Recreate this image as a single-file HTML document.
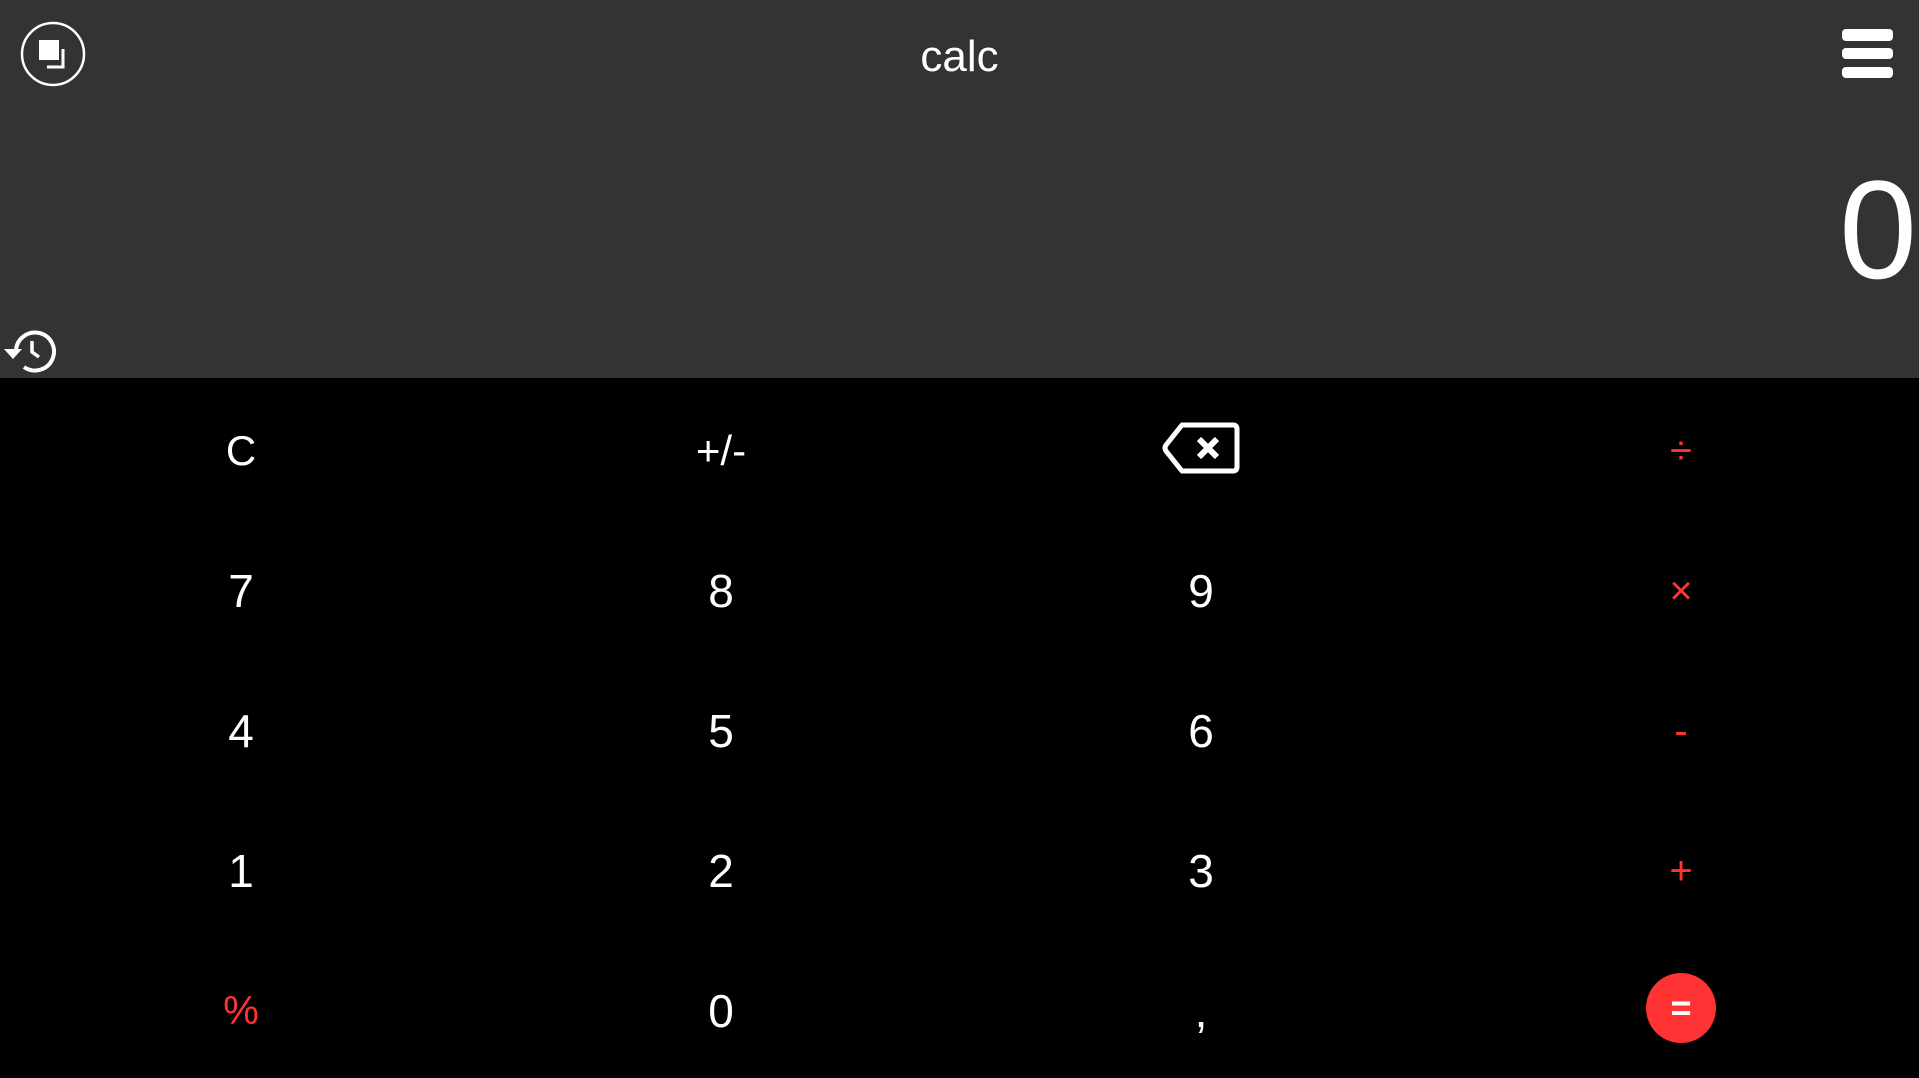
<!DOCTYPE html>
<html><head><meta charset="utf-8"><style>
html,body{margin:0;padding:0;width:1919px;height:1077px;overflow:hidden;background:#000;font-family:"Liberation Sans",sans-serif;}
#top{position:absolute;left:0;top:0;width:1919px;height:378px;background:#333;}
.t{position:absolute;color:#fff;}
.k{position:absolute;width:480px;height:140px;display:flex;align-items:center;justify-content:center;color:#fff;font-size:46px;padding-top:6px;box-sizing:border-box;}
.r{color:#ff3333;font-size:40px;}
</style></head><body>
<div id="top">
<svg style="position:absolute;left:20px;top:21px" width="66" height="66" viewBox="0 0 66 66">
<circle cx="33" cy="33" r="31" fill="none" stroke="#fff" stroke-width="2.5"/>
<rect x="19" y="19" width="20" height="20" fill="#fff"/>
<path d="M43 28 V46 H27" fill="none" stroke="#fff" stroke-width="3"/>
</svg>
<div class="t" style="left:0;width:1919px;top:32px;text-align:center;font-size:44px;">calc</div>
<svg style="position:absolute;left:1842px;top:29px" width="51" height="50">
<rect x="0" y="0" width="51" height="12" rx="4" fill="#fff"/>
<rect x="0" y="19" width="51" height="11" rx="4" fill="#fff"/>
<rect x="0" y="38" width="51" height="11" rx="4" fill="#fff"/>
</svg>
<div class="t" style="right:2px;top:150px;font-size:140px;line-height:160px;">0</div>
<svg style="position:absolute;left:2px;top:327px" width="54" height="50" viewBox="0 0 54 50">
<path d="M14 24 A19 19 0 1 1 22 40" fill="none" stroke="#fff" stroke-width="4"/>
<path d="M2 22 L20 22 L11 32 Z" fill="#fff"/>
<path d="M30 14 V25 L37 30" fill="none" stroke="#fff" stroke-width="3.5"/>
</svg>
</div>
<div class="k" style="left:1px;top:378px;font-size:42px">C</div>
<div class="k" style="left:481px;top:378px;font-size:42px">+/-</div>
<div class="k" style="left:961px;top:378px;padding-top:0"><svg width="78" height="54" viewBox="0 0 78 54"><path d="M20 4 H71 Q75 4 75 8 V46 Q75 50 71 50 H20 L4 30 Q2 27 4 24 Z" fill="none" stroke="#fff" stroke-width="5" stroke-linejoin="round"/><path d="M37 18 L55 36 M55 18 L37 36" stroke="#fff" stroke-width="6"/></svg></div>
<div class="k r" style="left:1441px;top:378px">÷</div>
<div class="k" style="left:1px;top:518px">7</div>
<div class="k" style="left:481px;top:518px">8</div>
<div class="k" style="left:961px;top:518px">9</div>
<div class="k r" style="left:1441px;top:518px">×</div>
<div class="k" style="left:1px;top:658px">4</div>
<div class="k" style="left:481px;top:658px">5</div>
<div class="k" style="left:961px;top:658px">6</div>
<div class="k r" style="left:1441px;top:658px">-</div>
<div class="k" style="left:1px;top:798px">1</div>
<div class="k" style="left:481px;top:798px">2</div>
<div class="k" style="left:961px;top:798px">3</div>
<div class="k r" style="left:1441px;top:798px">+</div>
<div class="k r" style="left:1px;top:938px">%</div>
<div class="k" style="left:481px;top:938px">0</div>
<div class="k" style="left:961px;top:938px">,</div>
<div class="k" style="left:1441px;top:938px;padding-top:0"><div style="width:70px;height:70px;border-radius:50%;background:#ff3333;display:flex;align-items:center;justify-content:center;color:#fff;font-size:36px;font-weight:bold;">=</div></div>
</body></html>
